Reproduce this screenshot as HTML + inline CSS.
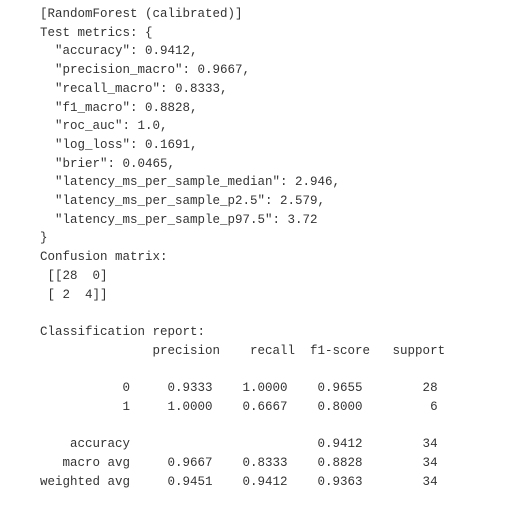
<!DOCTYPE html>
<html><head><style>
html,body{margin:0;padding:0;background:#fff;width:512px;height:512px;overflow:hidden}
pre{position:absolute;left:40px;top:5px;margin:0;font-family:"Liberation Mono",monospace;font-size:12.5px;line-height:18.7px;color:#333}
</style></head><body>
<pre>[RandomForest (calibrated)]
Test metrics: {
  "accuracy": 0.9412,
  "precision_macro": 0.9667,
  "recall_macro": 0.8333,
  "f1_macro": 0.8828,
  "roc_auc": 1.0,
  "log_loss": 0.1691,
  "brier": 0.0465,
  "latency_ms_per_sample_median": 2.946,
  "latency_ms_per_sample_p2.5": 2.579,
  "latency_ms_per_sample_p97.5": 3.72
}
Confusion matrix:
 [[28  0]
 [ 2  4]]

Classification report:
               precision    recall  f1-score   support

           0     0.9333    1.0000    0.9655        28
           1     1.0000    0.6667    0.8000         6

    accuracy                         0.9412        34
   macro avg     0.9667    0.8333    0.8828        34
weighted avg     0.9451    0.9412    0.9363        34</pre>
</body></html>
